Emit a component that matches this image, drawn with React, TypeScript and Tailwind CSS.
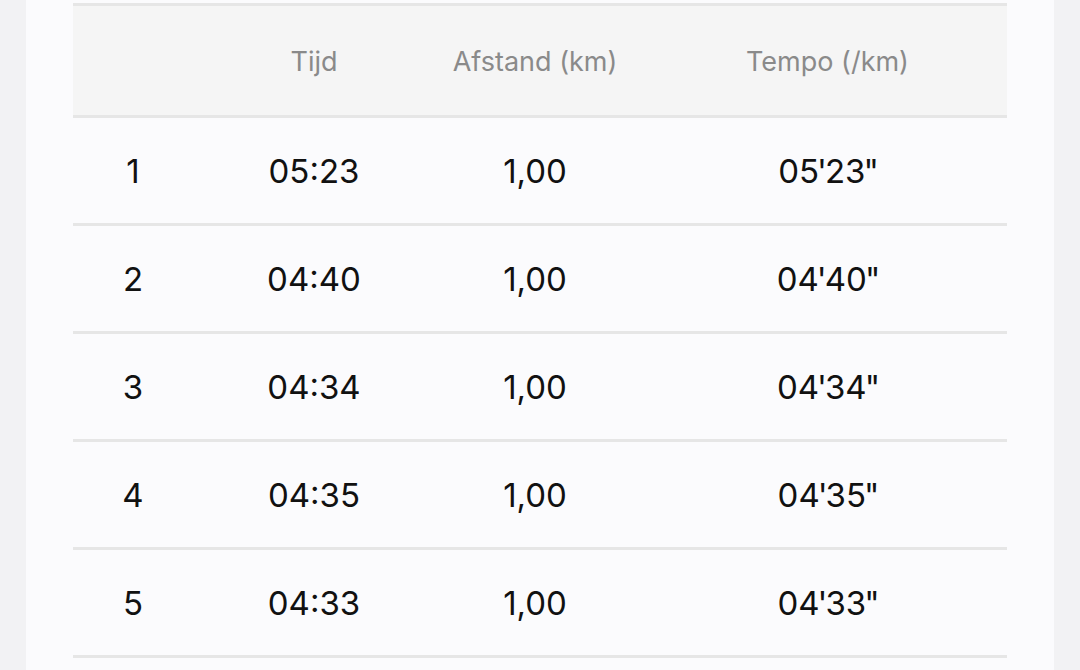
import React from "react";

const rows = [
  { n: "1", time: "05:23", dist: "1,00", min: "05", sec: "23" },
  { n: "2", time: "04:40", dist: "1,00", min: "04", sec: "40" },
  { n: "3", time: "04:34", dist: "1,00", min: "04", sec: "34" },
  { n: "4", time: "04:35", dist: "1,00", min: "04", sec: "35" },
  { n: "5", time: "04:33", dist: "1,00", min: "04", sec: "33" },
];

const cols = "grid grid-cols-[120px_242px_200px_1fr] items-center";

export default function App() {
  return (
    <div
      className="h-[670px] w-[1080px] overflow-hidden bg-[#f2f2f4] px-[26px]"
      style={{ fontFamily: "Inter, 'Noto Sans', sans-serif" }}
    >
      <div className="h-full bg-[#fbfbfd] px-[47px] pt-[3px]">
        <div className="border-t-[3px] border-[#e6e6e6]">
          <div className={`${cols} h-[112px] border-b-[3px] border-[#e6e6e6] bg-[#f5f5f5] pt-[3px] text-[27px] text-[#8a8a8a]`}>
            <div />
            <div className="text-center">Tijd</div>
            <div className="text-center">Afstand (km)</div>
            <div className="pl-[13px] text-center">Tempo (/km)</div>
          </div>
          {rows.map((r) => (
            <div
              key={r.n}
              className={`${cols} h-[108px] border-b-[3px] border-[#e6e6e6] pt-[2px] text-[33px] text-[#111]`}
            >
              <div className="text-center">{r.n}</div>
              <div className="text-center">{r.time}</div>
              <div className="text-center">{r.dist}</div>
              <div className="pl-[13px] text-center">
                {r.min}
                <span className="-mx-[2px]">'</span>
                {r.sec}
                <span className="-ml-[2px] -mr-[2px]">"</span>
              </div>
            </div>
          ))}
        </div>
      </div>
    </div>
  );
}
